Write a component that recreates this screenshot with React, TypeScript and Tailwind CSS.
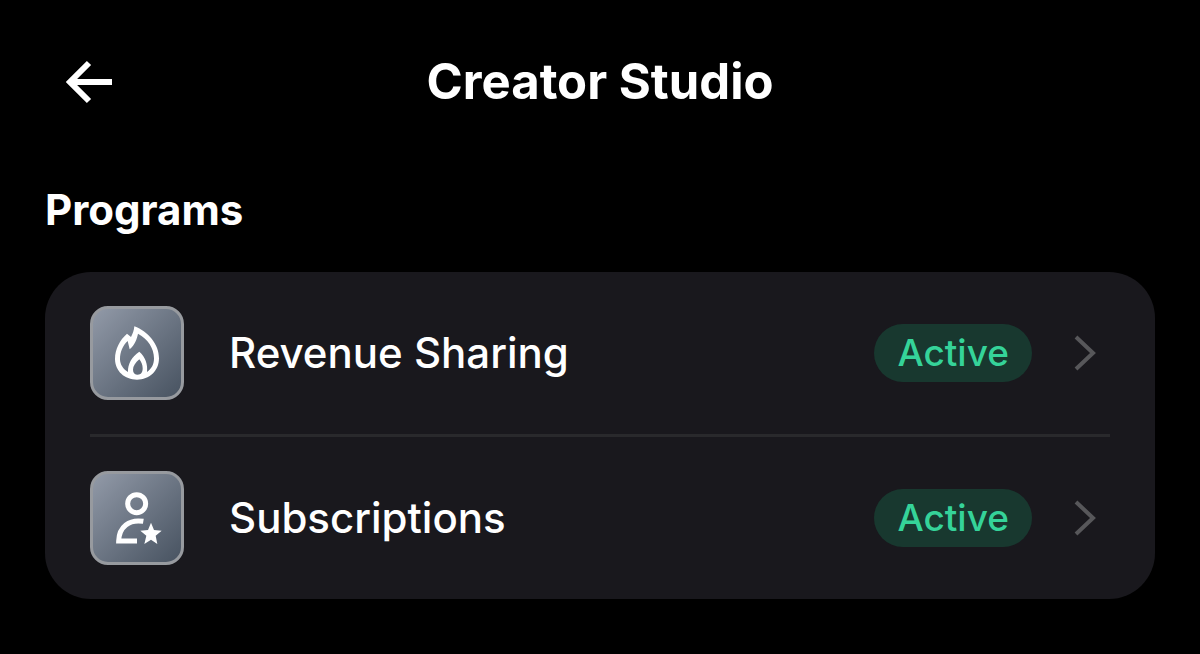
import type { ReactNode } from "react";

const programs = [
  { name: "Revenue Sharing", status: "Active", icon: <FlameIcon /> },
  { name: "Subscriptions", status: "Active", icon: <PersonStarIcon /> },
];

export default function App() {
  return (
    <div className="min-h-screen bg-black px-[45px] pt-12 pb-14 font-['Inter',sans-serif] text-white">
      <header className="grid grid-cols-[68px_1fr_68px] items-center">
        <button type="button" aria-label="Back" className="flex h-[68px] items-center pl-5">
          <BackArrow />
        </button>
        <h1 className="text-center text-[49px] leading-[68px] font-bold">Creator Studio</h1>
      </header>

      <section className="mt-16">
        <h2 className="text-[42px] leading-[60px] font-bold">Programs</h2>
        <ul className="mt-8 rounded-[46px] bg-[#19181d] px-[45px]">
          {programs.map((p) => (
            <ProgramRow key={p.name} name={p.name} status={p.status} icon={p.icon} />
          ))}
        </ul>
      </section>
    </div>
  );
}

function ProgramRow({ name, status, icon }: { name: string; status: string; icon: ReactNode }) {
  return (
    <li className="border-b-[3px] border-[#29292c] last:border-b-0">
      <button type="button" className="flex h-[162px] w-full items-center text-left">
        <span className="flex size-[94px] items-center justify-center rounded-[18px] border-[3px] border-[#979a9f] bg-linear-to-br from-[#929aa8] to-[#485361]">
          {icon}
        </span>
        <span className="ml-[45px] flex-1 text-[42px] leading-[60px] font-medium">{name}</span>
        <span className="rounded-full bg-[#18382f] px-[23px] text-[37px] leading-[58px] font-medium text-[#35d399]">
          {status}
        </span>
        <Chevron />
      </button>
    </li>
  );
}

function BackArrow() {
  return (
    <svg viewBox="0 0 48 44" className="h-11 w-12 shrink-0" fill="none" stroke="currentColor" strokeWidth="6">
      <path d="M24 3 L5 22 L24 41 M5 22 H47" />
    </svg>
  );
}

function Chevron() {
  return (
    <svg
      viewBox="0 0 24 36"
      className="mr-[13px] ml-[41px] h-9 w-6 shrink-0 text-[#57575a]"
      fill="none"
      stroke="currentColor"
      strokeWidth="4"
    >
      <path d="M3 2 L20 18 L3 34" />
    </svg>
  );
}

function FlameIcon() {
  return (
    <svg viewBox="75 76 192 192" className="size-16" fill="currentColor" fillRule="evenodd">
      <path
        d="M163 92 C205 108 237 146 237 188 C237 226 208 252 171 252 C134 252 105 226 105 190 C105 160 120 132 141 114 L153 124 C158 115 162 104 163 92 Z
           M174 114 C171 130 164 148 149 161 L143 136 C128 150 120 170 120 190 C120 206 129 220 144 229 C143 205 155 183 178 168 C196 184 204 206 201 229 C215 220 222 206 222 188 C222 158 204 130 174 114 Z
           M178 191 C166 201 159 212 159 222 C159 232 165 237 173 237 C183 237 188 230 188 218 C188 208 184 199 178 191 Z"
      />
    </svg>
  );
}

function PersonStarIcon() {
  return (
    <svg viewBox="75 76 192 192" className="size-16" fill="none">
      <g stroke="currentColor" strokeWidth="15">
        <circle cx="170" cy="129" r="27" />
        <path d="M190 182 C148 175 117 198 116 241 H171" />
      </g>
      <path
        fill="currentColor"
        d="M213 186 L222 208 L245 210 L227 225 L232 250 L213 237 L193 250 L199 225 L181 210 L204 208 Z"
      />
    </svg>
  );
}
